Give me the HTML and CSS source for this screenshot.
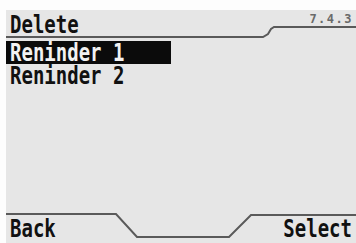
FILE: index.html
```html
<!DOCTYPE html>
<html lang="en">
<head>
  <meta charset="UTF-8">
  <title>Delete</title>
  <link rel="stylesheet" href="styles.css">
</head>
<body>
  <div class="screen">
    <div class="header">
      <svg class="rule" width="350" height="29" viewBox="0 0 350 29">
        <polyline points="0,27 257,27 262,24 265,19 268,17 350,17" fill="none" stroke="#5a5a5a" stroke-width="2"/>
      </svg>
      <span class="title">Delete</span>
      <span class="version">7.4.3</span>
    </div>

    <ul class="list">
      <li class="item selected"><span>Reninder 1</span></li>
      <li class="item"><span>Reninder 2</span></li>
    </ul>

    <div class="softkeys">
      <svg class="rule" width="350" height="33" viewBox="0 0 350 33">
        <polyline points="0,4 110,4 131,27 223,27 245,5 350,5" fill="none" stroke="#5a5a5a" stroke-width="2"/>
      </svg>
      <span class="key">Back</span>
      <span class="key">Select</span>
    </div>
  </div>
</body>
</html>
```

FILE: styles.css
```css
body { margin: 0; background: #fdfdfd; font-family: "DejaVu Sans Mono", monospace; font-weight: bold; color: #111; }

.screen {
  margin: 10px 0 0 6px;
  height: 233px;
  background: #e6e6e6;
  display: flex;
  flex-direction: column;
}

.header {
  position: relative;
  height: 29px;
  display: flex;
  justify-content: space-between;
  padding: 0 4px;
}

/* the step-shaped divider lines */
.rule { position: absolute; left: 0; top: 0; }

.title, .item span, .key {
  display: inline-block;
  font-size: 19px;
  line-height: 17px;
  transform: scaleY(1.3);
}

.title { margin-top: 7px; }

.version {
  font-size: 12px;
  line-height: 12px;
  margin-top: 3px;
  color: #6a6a6a;
  letter-spacing: 1.5px;
  margin-right: -1px;
}

.list { list-style: none; margin: 2px 0 0; padding: 0; flex: 1; }

.item { width: 161px; height: 23px; padding-left: 4px; }
.item span { margin-top: 3px; }

.selected { background: #0b0b0b; color: #f2f2f2; }

.softkeys {
  position: relative;
  height: 33px;
  display: flex;
  justify-content: space-between;
  padding: 0 4px;
}

.key { margin-top: 11px; }
```
